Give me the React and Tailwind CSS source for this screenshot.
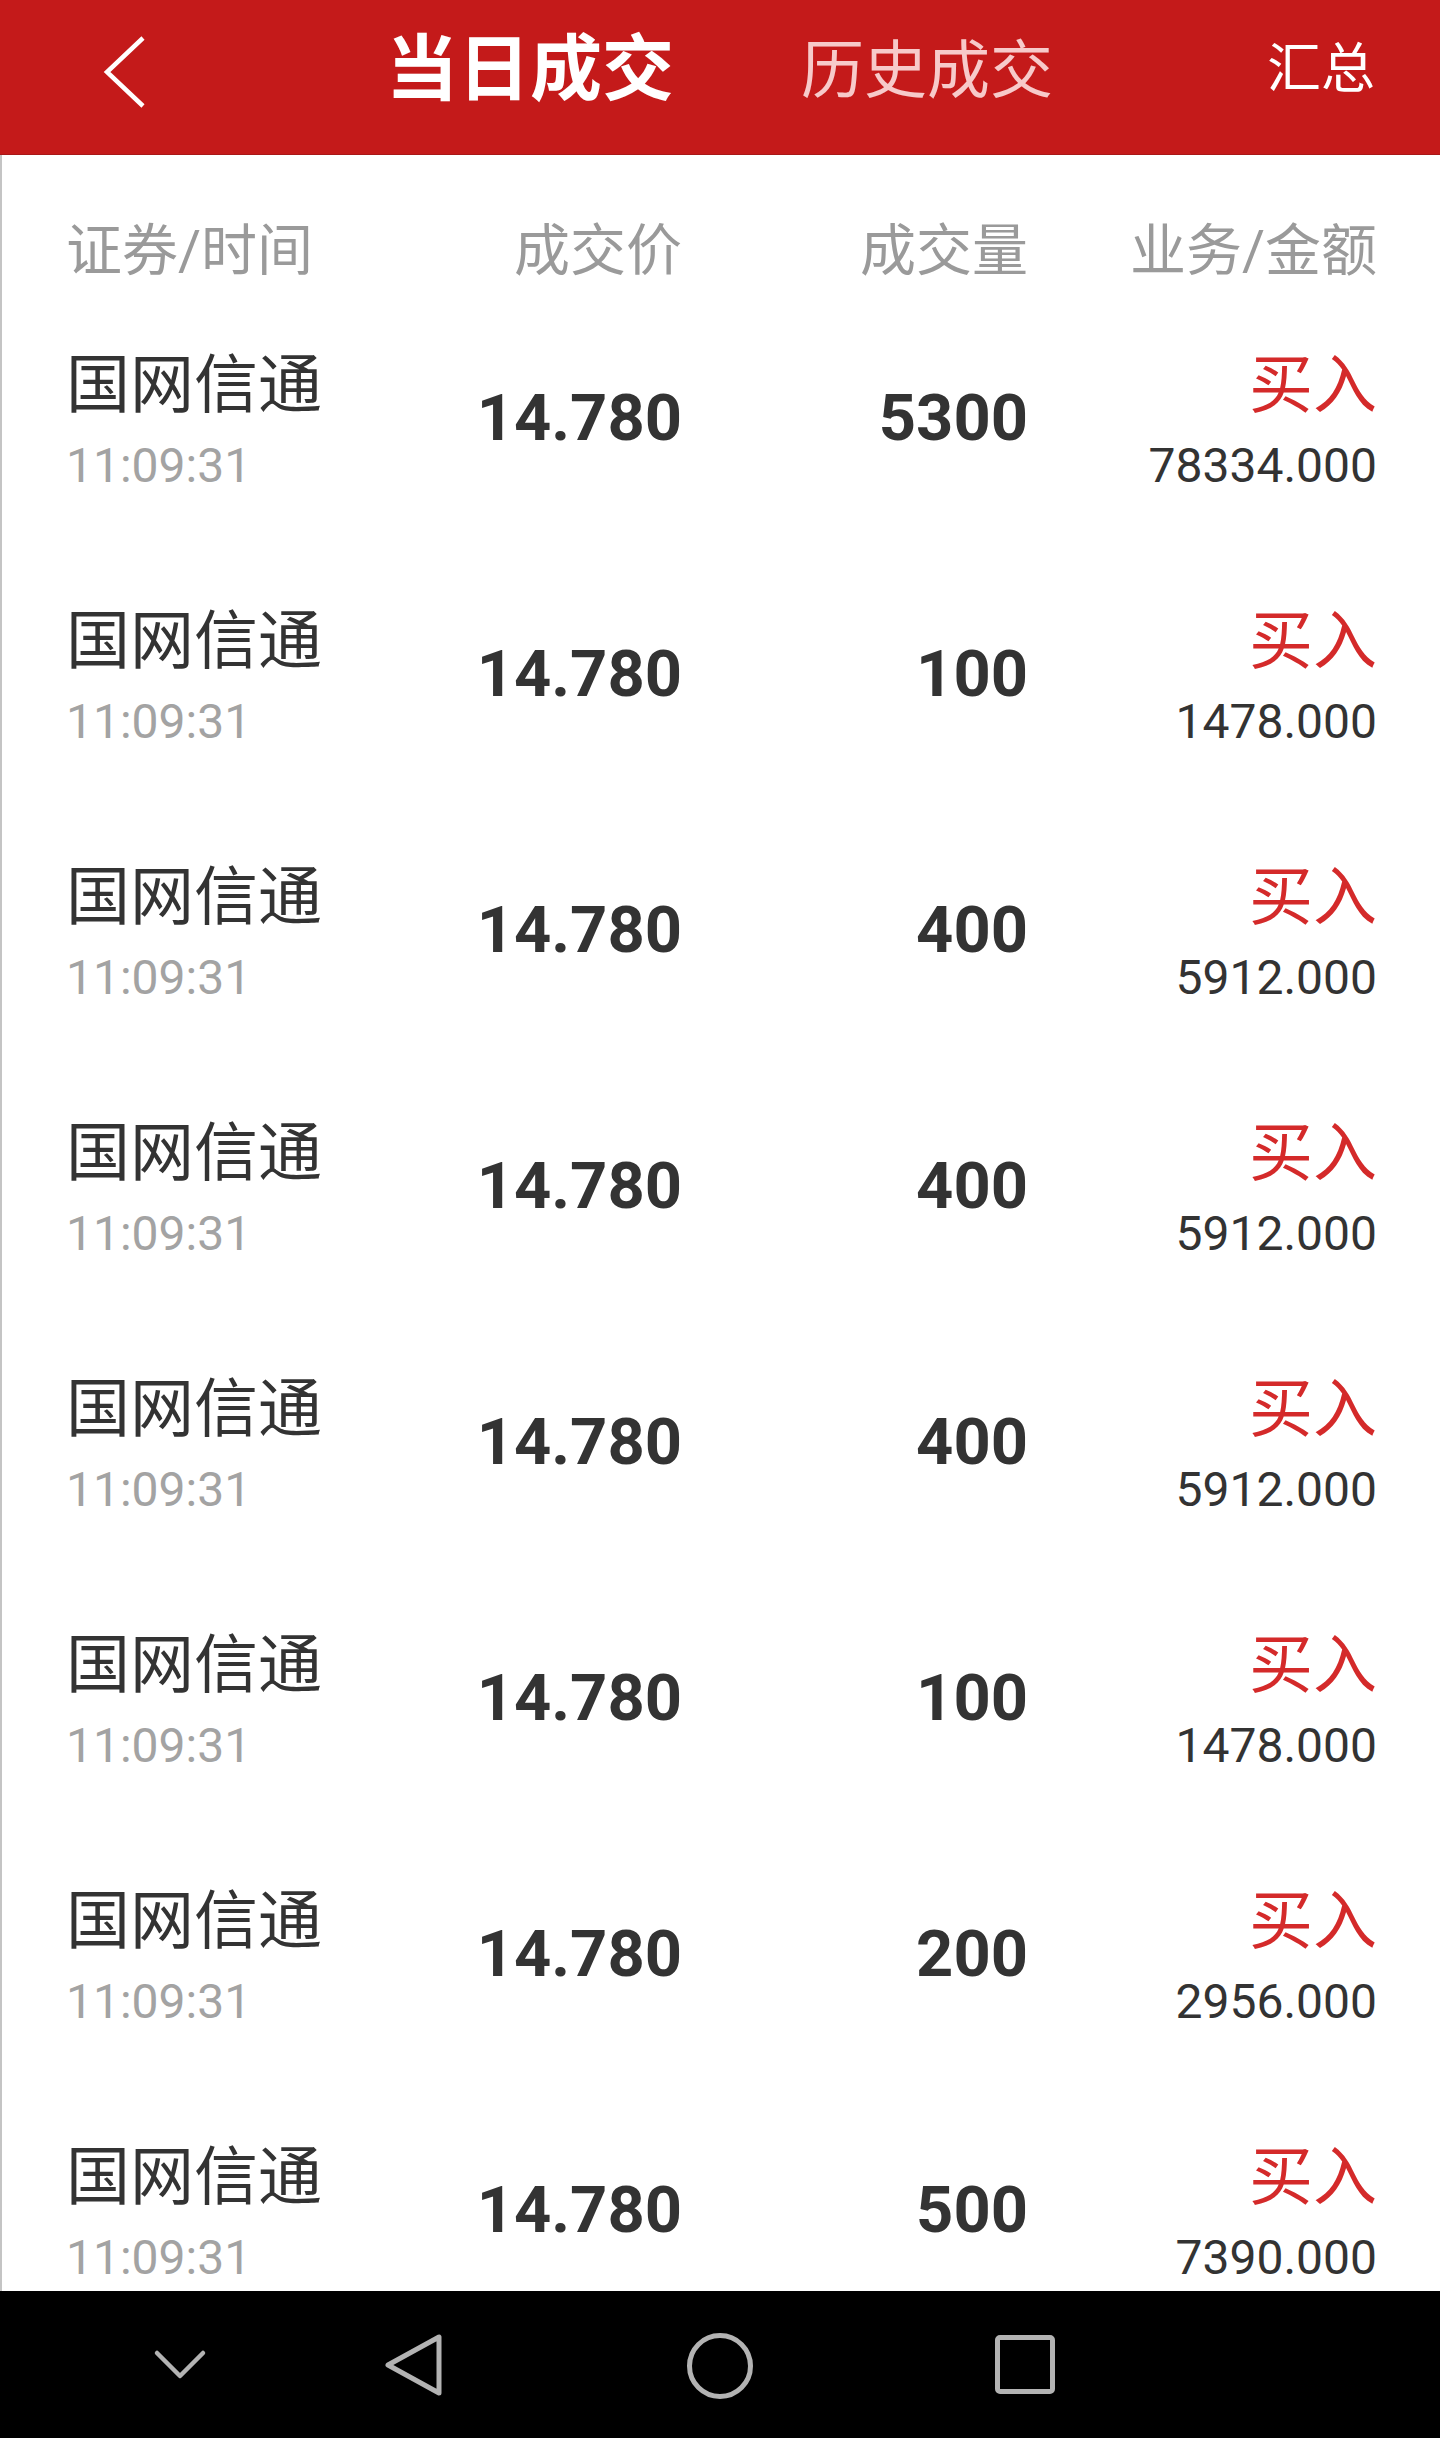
import React from "react"

const trades = [
  { qty: "5300", amount: "78334.000" },
  { qty: "100", amount: "1478.000" },
  { qty: "400", amount: "5912.000" },
  { qty: "400", amount: "5912.000" },
  { qty: "400", amount: "5912.000" },
  { qty: "100", amount: "1478.000" },
  { qty: "200", amount: "2956.000" },
  { qty: "500", amount: "7390.000" },
]

const cols = "grid grid-cols-[334px_280px_346px_349px] pl-[66px] pr-[65px]"

function NavBar() {
  return (
    <div className="h-[147px] shrink-0 bg-black flex items-center relative">
      <svg className="absolute left-[153px] top-[58px]" width="54" height="32" viewBox="0 0 54 32">
        <path d="M4 4 L27 27 L50 4" fill="none" stroke="#b3b3b3" strokeWidth="4.5" strokeLinecap="round" strokeLinejoin="round" />
      </svg>
      <svg className="absolute left-[382px] top-[40px]" width="64" height="68" viewBox="0 0 64 68">
        <path d="M57 6 L57 62 L6 34 Z" fill="none" stroke="#b3b3b3" strokeWidth="5" strokeLinejoin="round" />
      </svg>
      <div className="absolute left-[687px] top-[42px] w-[66px] h-[66px] rounded-full border-[5px] border-[#b3b3b3]" />
      <div className="absolute left-[995px] top-[44px] w-[60px] h-[59px] rounded-[5px] border-[5px] border-[#b3b3b3]" />
    </div>
  )
}

export default function App() {
  return (
    <div
      className="w-[1440px] h-[2438px] flex flex-col overflow-hidden bg-white"
      style={{ fontFamily: 'Roboto, "Noto Sans CJK SC", sans-serif' }}
    >
      <header className="h-[155px] shrink-0 bg-[#c41a1a] border-b border-[#a81818] flex items-center pl-[101px] pb-[14px]">
        <svg width="48" height="76" viewBox="0 0 48 76" className="shrink-0 mt-[4px]">
          <path d="M42 4 L6 38 L42 72" fill="none" stroke="white" strokeWidth="4.5" />
        </svg>
        <span className="ml-[237px] text-[72px] leading-none font-bold text-white">当日成交</span>
        <span className="ml-[127px] text-[63px] leading-none text-[#f7caca]">历史成交</span>
        <span className="ml-[214px] text-[54px] leading-none text-white">汇总</span>
      </header>

      <main className="flex-1 min-h-0 overflow-hidden border-l-2 border-[#c4c4c4]">
        <div className={`${cols} h-[135px] items-center pt-[56px] text-[56px] text-[#9a9a9a] leading-none`}>
          <span className="-ml-[2px]">证券/时间</span>
          <span className="text-right">成交价</span>
          <span className="text-right">成交量</span>
          <span className="text-right">业务/金额</span>
        </div>

        {trades.map((t, i) => (
          <div key={i} className={`${cols} h-[256px] shrink-0 items-center`}>
            <div className="flex flex-col -ml-[2px] pt-[8px]">
              <span className="text-[64px] leading-[72px] text-[#333333]">国网信通</span>
              <span className="text-[48px] leading-[56px] text-[#a3a3a3] mt-[16px]">11:09:31</span>
            </div>
            <span className="text-right text-[65px] font-bold text-[#333333] leading-none">14.780</span>
            <span className="text-right text-[65px] font-bold text-[#333333] leading-none">{t.qty}</span>
            <div className="flex flex-col items-end pt-[8px]">
              <span className="text-[64px] leading-[72px] text-[#d42a2a]">买入</span>
              <span className="text-[48px] leading-[56px] text-[#333333] mt-[16px]">{t.amount}</span>
            </div>
          </div>
        ))}
      </main>

      <NavBar />
    </div>
  )
}
